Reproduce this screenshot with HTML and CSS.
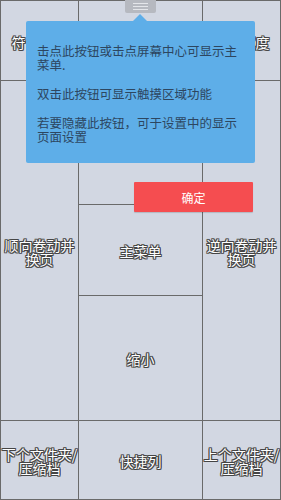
FILE: index.html
```html
<!DOCTYPE html>
<html lang="zh-CN">
<head>
<meta charset="utf-8">
<link rel="stylesheet" href="styles.css">
</head>
<body>
<div class="screen">
  <div class="grid">
    <div class="cell c-lt"><span class="label">符合屏幕</span></div>
    <div class="cell c-mt"></div>
    <div class="cell c-rt"><span class="label">符合宽度</span></div>
    <div class="cell c-lm"><span class="label">顺向卷动并<br>换页</span></div>
    <div class="cell c-menu"><span class="label">主菜单</span></div>
    <div class="cell c-zoom"><span class="label">缩小</span></div>
    <div class="cell c-rm"><span class="label">逆向卷动并<br>换页</span></div>
    <div class="cell c-lb"><span class="label">下个文件夹/<br>压缩档</span></div>
    <div class="cell c-mb"><span class="label">快捷列</span></div>
    <div class="cell c-rb"><span class="label">上个文件夹/<br>压缩档</span></div>
  </div>

  <div class="handle"><i></i><i></i><i></i></div>
  <div class="tip">
    <div class="tip-arrow"></div>
    <p>击点此按钮或击点屏幕中心可显示主菜单.</p>
    <p>双击此按钮可显示触摸区域功能</p>
    <p>若要隐藏此按钮，可于设置中的显示页面设置</p>
  </div>
  <button class="ok">确定</button>
</div>
</body>
</html>
```
FILE: styles.css
```css
* { box-sizing: border-box; }
html, body { margin: 0; padding: 0; }
body {
  width: 281px;
  height: 500px;
  overflow: hidden;
  font-family: "Noto Sans CJK SC", "Noto Sans", sans-serif;
}
.screen {
  position: relative;
  width: 281px;
  height: 500px;
}
.grid {
  display: grid;
  width: 281px;
  height: 500px;
  padding: 1px;
  gap: 1px;
  background: #6a6a6a;
  grid-template-columns: 77px 123px 77px;
  grid-template-rows: 79px 123px 90px 124px 78px;
}
.cell {
  background: #d2d7e2;
  display: flex;
  align-items: center;
  justify-content: center;
  text-align: center;
}
.c-lt { grid-column: 1; grid-row: 1; }
.c-mt { grid-column: 2; grid-row: 1 / 3; }
.c-rt { grid-column: 3; grid-row: 1; }
.c-lm { grid-column: 1; grid-row: 2 / 5; }
.c-menu { grid-column: 2; grid-row: 3; }
.c-zoom { grid-column: 2; grid-row: 4; }
.c-rm { grid-column: 3; grid-row: 2 / 5; }
.c-lb { grid-column: 1; grid-row: 5; }
.c-mb { grid-column: 2; grid-row: 5; }
.c-rb { grid-column: 3; grid-row: 5; }

.label {
  font-size: 14px;
  line-height: 14px;
  color: #ffffff;
  white-space: nowrap;
  padding-top: 2px;
  text-shadow:
    1px 0 0 #444, -1px 0 0 #444,
    0 1px 0 #444, 0 -1px 0 #444,
    1px 1px 0 #555, -1px -1px 0 #555,
    1px -1px 0 #555, -1px 1px 0 #555;
}

.handle {
  position: absolute;
  left: 125px;
  top: 0;
  width: 31px;
  height: 13px;
  background: #b6b9c0;
  border-radius: 0 0 2px 2px;
  display: flex;
  flex-direction: column;
  align-items: center;
  justify-content: center;
  gap: 2px;
}
.handle i {
  display: block;
  width: 15px;
  height: 1px;
  background: #e4e6ea;
}

.tip {
  position: absolute;
  left: 26px;
  top: 21px;
  width: 229px;
  height: 142px;
  background: #5eaee8;
  border-radius: 2px;
  padding: 23px 11px 0 11px;
  color: #2d4660;
  font-size: 12.5px;
  line-height: 14px;
}
.tip-arrow {
  position: absolute;
  left: 107px;
  top: -7px;
  width: 0;
  height: 0;
  border-left: 7.5px solid transparent;
  border-right: 7.5px solid transparent;
  border-bottom: 7px solid #5eaee8;
}
.tip p {
  margin: 0 0 15px 0;
}

.ok {
  position: absolute;
  left: 134px;
  top: 182px;
  width: 119px;
  height: 30px;
  border: none;
  border-radius: 1px;
  background: #f54d50;
  color: #ffffff;
  font-family: "Noto Sans CJK SC", sans-serif;
  font-size: 12px;
  padding: 0;
  box-shadow: 0 1px 1px rgba(0,0,0,0.15);
}
```
